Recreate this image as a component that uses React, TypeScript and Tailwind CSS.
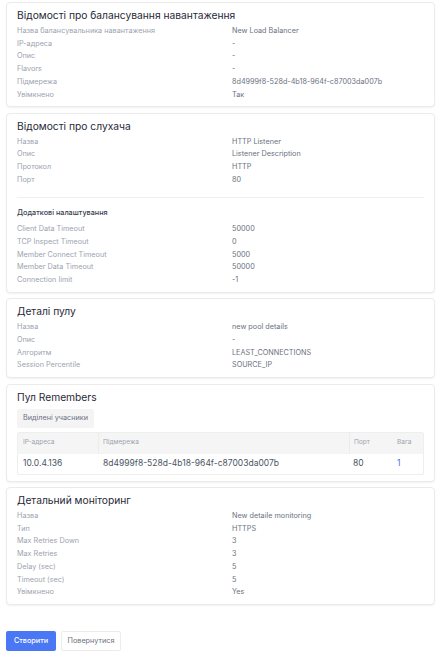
import React from 'react';

type Row = [string, string];

const lbRows: Row[] = [
  ['Назва балансувальника навантаження', 'New Load Balancer'],
  ['IP-адреса', '-'],
  ['Опис', '-'],
  ['Flavors', '-'],
  ['Підмережа', '8d4999f8-528d-4b18-964f-c87003da007b'],
  ['Увімкнено', 'Так'],
];

const listenerRows: Row[] = [
  ['Назва', 'HTTP Listener'],
  ['Опис', 'Listener Description'],
  ['Протокол', 'HTTP'],
  ['Порт', '80'],
];

const extraRows: Row[] = [
  ['Client Data Timeout', '50000'],
  ['TCP Inspect Timeout', '0'],
  ['Member Connect Timeout', '5000'],
  ['Member Data Timeout', '50000'],
  ['Connection limit', '-1'],
];

const poolRows: Row[] = [
  ['Назва', 'new pool details'],
  ['Опис', '-'],
  ['Алгоритм', 'LEAST_CONNECTIONS'],
  ['Session Percentile', 'SOURCE_IP'],
];

const monitorRows: Row[] = [
  ['Назва', 'New detaile monitoring'],
  ['Тип', 'HTTPS'],
  ['Max Retries Down', '3'],
  ['Max Retries', '3'],
  ['Delay (sec)', '5'],
  ['Timeout (sec)', '5'],
  ['Увімкнено', 'Yes'],
];

const Card: React.FC<{ title: string; children: React.ReactNode }> = ({ title, children }) => (
  <div className="border border-[#ebebeb] rounded-[4px] bg-white shadow-[0_1px_2px_rgba(0,0,0,0.06)] px-[10px] pt-[5px] pb-[5px]">
    <h2 className="text-[10.25px] leading-[14px] text-[#1f2937] mb-[3px]">{title}</h2>
    {children}
  </div>
);

const Rows: React.FC<{ rows: Row[] }> = ({ rows }) => (
  <div>
    {rows.map(([label, value], i) => (
      <div key={i} className="grid grid-cols-[215px_1fr] text-[7.25px] leading-[12.7px]">
        <span className="text-[#9ca3af]">{label}</span>
        <span className="text-[#6b7280]">{value}</span>
      </div>
    ))}
  </div>
);

const App: React.FC = () => {
  return (
    <div className="min-h-screen bg-white px-[6px] pt-[2px] pb-[6px]" style={{ fontFamily: 'Inter, "Noto Sans", sans-serif' }}>
      <div className="w-[429px] flex flex-col gap-[5.5px]">
        {/* Load balancer */}
        <Card title="Відомості про балансування навантаження">
          <Rows rows={lbRows} />
        </Card>

        {/* Listener */}
        <Card title="Відомості про слухача">
          <Rows rows={listenerRows} />
          <div className="border-t border-[#f0f0f0] mt-[10px]" />
          <div className="text-[7.25px] leading-[12.7px] text-[#374151] font-medium mt-[9px] mb-[4px]">
            Додаткові налаштування
          </div>
          <Rows rows={extraRows} />
        </Card>

        {/* Pool */}
        <Card title="Деталі пулу">
          <Rows rows={poolRows} />
        </Card>

        {/* Members */}
        <Card title="Пул Remembers">
          <button className="block mt-[5px] h-[19px] px-[6px] bg-[#f4f4f5] rounded-[2px] text-[7.25px] text-[#6b7280]">
            Виділені учасники
          </button>
          <div className="mt-[4px] mb-[1px] border border-[#eeeeee] rounded-[2px]">
            <div className="grid grid-cols-[81px_250px_44px_1fr] h-[21px] bg-[#f5f5f5] text-[6.5px] text-[#9ca3af] items-center">
              <div className="pl-[5px] h-full flex items-center border-r border-[#ececec]">IP-адреса</div>
              <div className="pl-[4px]">Підмережа</div>
              <div className="pl-[4px] h-full flex items-center border-l border-[#ececec]">Порт</div>
              <div className="pl-[4px]">Вага</div>
            </div>
            <div className="grid grid-cols-[81px_250px_44px_1fr] h-[20px] items-center text-[8.5px] text-[#4b5563]">
              <div className="pl-[5px]">10.0.4.136</div>
              <div className="pl-[4px]">8d4999f8-528d-4b18-964f-c87003da007b</div>
              <div className="pl-[4px]">80</div>
              <div className="pl-[4px] text-[#3b6ff5]">1</div>
            </div>
          </div>
        </Card>

        {/* Monitor */}
        <Card title="Детальний моніторинг">
          <Rows rows={monitorRows} />
        </Card>
      </div>

      <div className="flex gap-[5px] mt-[26px]">
        <button className="h-[20px] w-[50px] rounded-[2px] bg-[#4a78f5] text-white text-[7.25px] font-medium">
          Створити
        </button>
        <button className="h-[20px] w-[60px] rounded-[2px] bg-white border border-[#ececec] text-[#6b7280] text-[7.25px]">
          Повернутися
        </button>
      </div>
    </div>
  );
};

export default App;
